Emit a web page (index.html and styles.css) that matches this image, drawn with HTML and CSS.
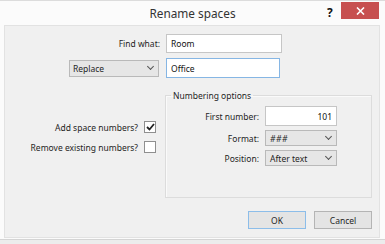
FILE: index.html
```html
<!DOCTYPE html>
<html lang="en">
<head>
  <meta charset="UTF-8" />
  <title>Rename spaces</title>
  <link rel="stylesheet" href="styles.css">
</head>
<body>
  <div class="window">
    <div class="title-bar">
      <span class="title">Rename spaces</span>
      <span class="help">?</span>
      <button class="close-btn">
        <svg width="9" height="8" viewBox="0 0 9 8"><path d="M1 0.5 L8 7.5 M8 0.5 L1 7.5" stroke="#fff" stroke-width="1.6"/></svg>
      </button>
    </div>

    <div class="panel">
      <!-- Find / replace -->
      <div class="find-grid">
        <label class="field-label" for="find">Find what:</label>
        <input type="text" id="find" class="text-input" value="Room">
        <div class="select mode-select"><span>Replace</span><span class="chev"></span></div>
        <input type="text" id="replace" class="text-input focused" value="Office">
      </div>

      <div class="middle">
        <div class="checks">
          <div class="check-row">
            <span>Add space numbers?</span>
            <span class="checkbox checked">
              <svg width="9" height="8" viewBox="0 0 9 8"><path d="M1 4 L3.5 6.5 L8 1" stroke="#222" stroke-width="1.8" fill="none"/></svg>
            </span>
          </div>
          <div class="check-row">
            <span>Remove existing numbers?</span>
            <span class="checkbox"></span>
          </div>
        </div>

        <fieldset class="group-box">
          <legend>Numbering options</legend>
          <div class="option-grid">
            <label class="field-label" for="first-number">First number:</label>
            <input type="text" id="first-number" class="text-input number" value="101">
            <span class="field-label">Format:</span>
            <div class="select small"><span class="hash">###</span><span class="chev"></span></div>
            <span class="field-label">Position:</span>
            <div class="select small"><span>After text</span><span class="chev"></span></div>
          </div>
        </fieldset>
      </div>

      <div class="footer">
        <button class="btn default">OK</button>
        <button class="btn">Cancel</button>
      </div>
    </div>
  </div>
  <div class="taskbar"></div>
</body>
</html>
```

FILE: styles.css
```css
* {
  margin: 0;
  padding: 0;
  box-sizing: border-box;
}

body {
  font-family: 'Noto Sans', sans-serif;
  font-size: 8.5px;
  color: #1e1e1e;
  background: #fbfbfb;
  width: 385px;
  height: 244px;
  overflow: hidden;
}

.window {
  height: 239px;
  border-top: 1px solid #dcdcdc;
  background: #fbfbfb;
}

.title-bar {
  height: 24px;
  display: flex;
  align-items: flex-start;
  position: relative;
}

.title {
  position: absolute;
  left: 0;
  right: 0;
  top: 4px;
  text-align: center;
  font-size: 11.8px;
  color: #333;
}

.help {
  position: absolute;
  left: 327px;
  top: 3px;
  font-size: 12px;
  font-weight: bold;
  color: #111;
}

.close-btn {
  position: absolute;
  left: 341px;
  top: 1px;
  width: 38px;
  height: 17px;
  border: none;
  background: #c75050;
  display: flex;
  align-items: center;
  justify-content: center;
}

.panel {
  margin: 0 5px 0 4px;
  height: 213px;
  background: #f0f0f0;
  border: 1px solid #e2e2e2;
  display: flex;
  flex-direction: column;
}

.find-grid {
  display: grid;
  grid-template-columns: 155px 116px;
  column-gap: 6px;
  row-gap: 5px;
  margin-top: 8px;
  align-items: center;
}

.field-label {
  text-align: right;
  color: #1e1e1e;
}

.text-input {
  font-family: inherit;
  font-size: 8.5px;
  color: #111;
  height: 19px;
  padding: 0 4px;
  border: 1px solid #c6c6c6;
  background: #fff;
  outline: none;
}

.text-input.focused {
  border-color: #86b6e4;
  height: 20px;
  width: 114px;
}

.select {
  display: flex;
  align-items: center;
  justify-content: space-between;
  height: 17px;
  padding: 0 5px 0 3px;
  background: #e6e6e6;
  border: 1px solid #b9b9b9;
}

.mode-select {
  justify-self: end;
  width: 90px;
  margin-right: 1px;
}

.chev {
  width: 5px;
  height: 5px;
  border-right: 1px solid #555;
  border-bottom: 1px solid #555;
  transform: rotate(45deg);
  margin-top: -3px;
}

.middle {
  display: flex;
  margin-top: 12px;
}

.checks {
  width: 160px;
  padding-top: 31px;
  padding-right: 9px;
  display: flex;
  flex-direction: column;
  gap: 8px;
}

.check-row {
  display: flex;
  justify-content: flex-end;
  align-items: center;
  gap: 6px;
}

.checkbox {
  width: 12px;
  height: 12px;
  border: 1px solid #8f8f8f;
  background: #fff;
  display: flex;
  align-items: center;
  justify-content: center;
}

.group-box {
  width: 207px;
  height: 108px;
  border: 1px solid #dcdcdc;
  box-shadow: inset 1px 1px #fafafa;
  padding: 0;
}

.group-box legend {
  margin-left: 5px;
  padding: 0 2px;
  color: #1e1e1e;
}

.option-grid {
  display: grid;
  grid-template-columns: 93px 72px;
  column-gap: 6px;
  row-gap: 4px;
  margin-top: 5px;
  align-items: center;
}

.text-input.number {
  text-align: right;
  height: 20px;
}

.select.small {
  height: 16px;
  padding: 0 5px 0 4px;
}

.hash {
  font-style: italic;
  letter-spacing: 0.5px;
}

.footer {
  display: flex;
  justify-content: flex-end;
  gap: 8px;
  margin-top: auto;
  margin-bottom: 8px;
  padding-right: 7px;
}

.btn {
  width: 58px;
  height: 18px;
  font-family: inherit;
  font-size: 8.5px;
  color: #1e1e1e;
  background: #e4e4e4;
  border: 1px solid #b4b4b4;
}

.btn.default {
  border-color: #8cbde9;
}

.taskbar {
  height: 5px;
  border-top: 1px solid #d4d4d4;
  background: #ececec;
}
```
